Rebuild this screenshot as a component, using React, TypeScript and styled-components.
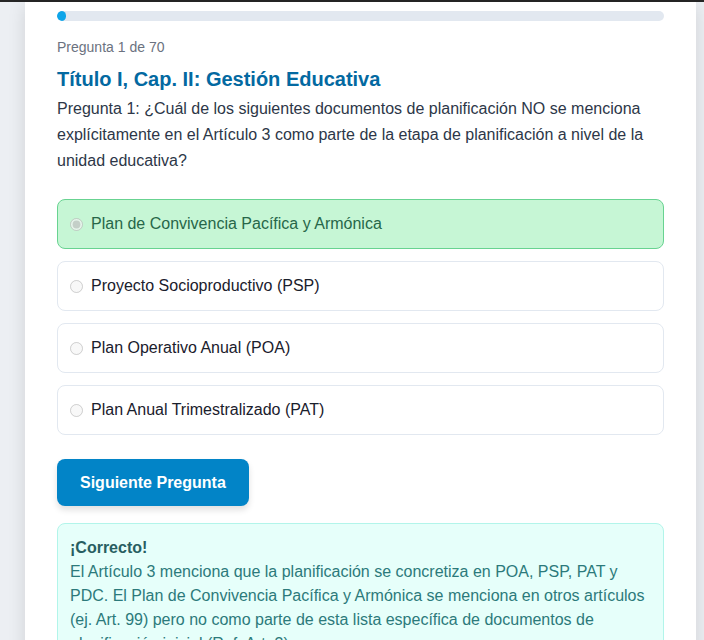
import React from "react";
import styled, { createGlobalStyle } from "styled-components";

const Global = createGlobalStyle`
  html, body { margin: 0; padding: 0; }
  body {
    background: #eceff3;
    font-family: "Liberation Sans", Arial, sans-serif;
    overflow: hidden;
  }
`;

const TopEdge = styled.div`
  height: 2px;
  background: #262626;
`;

const Page = styled.div`
  padding: 0 8px 40px 25px;
`;

const Card = styled.div`
  background: #ffffff;
  padding: 9px 32px 32px 32px;
  box-shadow: 0 4px 18px rgba(0, 0, 0, 0.12);
  border-radius: 0 0 12px 12px;
`;

const Track = styled.div`
  height: 10px;
  border-radius: 999px;
  background: #e2e8f0;
  overflow: hidden;
`;

const Fill = styled.div`
  height: 100%;
  background: #0ea5e9;
  border-radius: 999px;
`;

const Counter = styled.div`
  margin-top: 16px;
  font-size: 14px;
  line-height: 20px;
  color: #6b7280;
`;

const Title = styled.h2`
  margin: 8px 0 3px;
  font-size: 20px;
  line-height: 28px;
  font-weight: 700;
  color: #0369a1;
`;

const Question = styled.p`
  margin: 0 0 25px;
  font-size: 16px;
  line-height: 26px;
  color: #2d3748;
`;

const Options = styled.div`
  display: flex;
  flex-direction: column;
  gap: 12px;
`;

const Option = styled.label<{ $correct?: boolean }>`
  display: flex;
  align-items: center;
  padding: 12px;
  border-radius: 8px;
  border: 1px solid ${(p) => (p.$correct ? "#68d391" : "#e2e8f0")};
  background: ${(p) => (p.$correct ? "#c6f6d5" : "#ffffff")};
  color: ${(p) => (p.$correct ? "#276749" : "#1a202c")};
  font-size: 16px;
  line-height: 24px;
`;

const Radio = styled.input`
  margin: 0 8px 0 0;
  width: 13px;
  height: 13px;
`;

const NextButton = styled.button`
  align-self: flex-start;
  margin-top: 24px;
  padding: 14px 23px;
  border: none;
  border-radius: 8px;
  background: #0284c7;
  color: #ffffff;
  font-family: "Liberation Sans", Arial, sans-serif;
  font-size: 16px;
  line-height: 19px;
  font-weight: 700;
  box-shadow: 0 4px 6px rgba(0, 0, 0, 0.12);
  cursor: pointer;
`;

const Feedback = styled.div`
  margin-top: 17px;
  padding: 12px;
  border-radius: 8px;
  border: 1px solid #b2f5ea;
  background: #e6fffa;
  color: #2c7a7b;
  font-size: 16px;
  line-height: 24px;
`;

const FeedbackTitle = styled.div`
  font-weight: 700;
  color: #285e61;
`;

const options = [
  "Plan de Convivencia Pacífica y Armónica",
  "Proyecto Socioproductivo (PSP)",
  "Plan Operativo Anual (POA)",
  "Plan Anual Trimestralizado (PAT)",
];

export default function App() {
  const current = 1;
  const total = 70;
  return (
    <>
      <Global />
      <TopEdge />
      <Page>
        <Card>
          <Track>
            <Fill style={{ width: `${(current / total) * 100}%` }} />
          </Track>
          <Counter>
            Pregunta {current} de {total}
          </Counter>
          <Title>Título I, Cap. II: Gestión Educativa</Title>
          <Question>
            Pregunta 1: ¿Cuál de los siguientes documentos de planificación NO se menciona
            explícitamente en el Artículo 3 como parte de la etapa de planificación a nivel de la
            unidad educativa?
          </Question>
          <Options>
            {options.map((o, i) => (
              <Option key={o} $correct={i === 0}>
                <Radio type="radio" name="q" disabled defaultChecked={i === 0} />
                {o}
              </Option>
            ))}
          </Options>
          <NextButton>Siguiente Pregunta</NextButton>
          <Feedback>
            <FeedbackTitle>¡Correcto!</FeedbackTitle>
            El Artículo 3 menciona que la planificación se concretiza en POA, PSP, PAT y PDC. El
            Plan de Convivencia Pacífica y Armónica se menciona en otros artículos (ej. Art. 99)
            pero no como parte de esta lista específica de documentos de planificación inicial
            (Ref. Art. 3).
          </Feedback>
        </Card>
      </Page>
    </>
  );
}
